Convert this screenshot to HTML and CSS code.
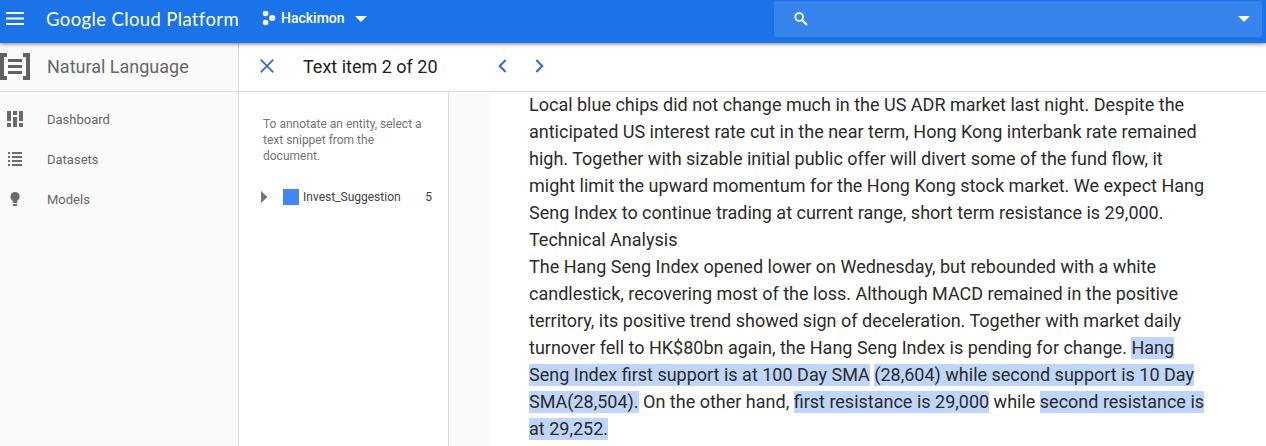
FILE: index.html
```html
<!DOCTYPE html>
<html lang="en">
<head>
<meta charset="utf-8">
<title>Natural Language – Google Cloud Platform</title>
<link rel="stylesheet" href="styles.css">
</head>
<body>
<header class="topbar">
  <svg class="menu" width="18" height="14" viewBox="0 0 18 14"><path d="M0 1h18M0 6.5h18M0 12h18" stroke="#fff" stroke-width="2"/></svg>
  <div class="brand"><span class="google">Google</span> <span class="cloud">Cloud Platform</span></div>
  <svg class="project-icon" width="14" height="16" viewBox="0 0 14 16" fill="#fff"><circle cx="3.6" cy="3.500" r="2.800"/><circle cx="10.200" cy="8" r="3.100"/><circle cx="3.6" cy="12.500" r="2.800"/></svg>
  <span class="project">Hackimon</span>
  <svg class="caret" width="12" height="6" viewBox="0 0 12 6"><path d="M0 0h12L6 6z" fill="#fff"/></svg>
  <div class="search">
    <svg width="14" height="14" viewBox="0 0 14 14" fill="none" stroke="#fff"><circle cx="5.2" cy="5" r="3.9" stroke-width="1.8"/><path d="M8 8l5 5" stroke-width="2.1"/></svg>
    <svg width="12" height="6" viewBox="0 0 12 6"><path d="M0 0h12L6 6z" fill="#fff"/></svg>
  </div>
</header>
<div class="shell">
  <aside class="sidebar">
    <div class="product">
      <svg width="30" height="28" viewBox="0 0 30 28" fill="none" stroke="#616161"><path d="M7 2H2v23h5M23 2h5v23h-5" stroke-width="4"/><path d="M8 7.500h14M8 13.500h14M8 19.500h14" stroke-width="3.2"/></svg>
      <span>Natural Language</span>
    </div>
    <nav>
      <a class="item"><svg width="30" height="20" viewBox="0 0 30 20" fill="#6b6b6b"><path d="M7 2h4v10H7zM7 14h4v4H7zM13 2h4v4h-4zM13 8h4v10h-4zM19 2h4v10h-4zM19 14h4v4h-4z"/></svg><span>Dashboard</span></a>
      <a class="item"><svg width="30" height="20" viewBox="0 0 30 20" fill="#6b6b6b"><path d="M8 3h2v2H8zM12 3h10v2H12zM8 7h2v2H8zM12 7h10v2H12zM8 11h2v2H8zM12 11h10v2H12zM8 15h2v2H8zM12 15h10v2H12z"/></svg><span>Datasets</span></a>
      <a class="item"><svg width="30" height="20" viewBox="0 0 30 20" fill="#6b6b6b"><path d="M15 3a4.600 4.600 0 0 0-2.400 8.500V13q0 1 1 1h2.800q1 0 1-1v-1.500A4.600 4.600 0 0 0 15 3zM12.800 15h4.400v1q0 1-1 1h-2.400q-1 0-1-1z"/></svg><span>Models</span></a>
    </nav>
  </aside>
  <main class="main">
    <div class="toolbar">
      <svg width="14" height="14" viewBox="0 0 14 14"><path d="M.7.7l12.600 12.600M13.300.7L.7 13.300" stroke="#3367d6" stroke-width="1.700"/></svg>
      <h1>Text item 2 of 20</h1>
      <svg width="9" height="14" viewBox="0 0 9 14" fill="none"><path d="M7.700 1L1.700 7l6 6" stroke="#3367d6" stroke-width="2"/></svg>
      <svg class="next" width="9" height="14" viewBox="0 0 9 14" fill="none"><path d="M1.300 1l6 6-6 6" stroke="#3367d6" stroke-width="2"/></svg>
    </div>
    <div class="content">
      <section class="labels">
        <p>To annotate an entity, select a<br>text snippet from the<br>document.</p>
        <div class="label">
          <svg width="7" height="12" viewBox="0 0 7 12"><path d="M0 0l6.500 6L0 12z" fill="#757575"/></svg>
          <span class="swatch"></span>
          <span class="name">Invest_Suggestion</span>
          <span class="count">5</span>
        </div>
      </section>
      <div class="gutter"></div>
      <article class="document">Local blue chips did not change much in the US ADR market last night. Despite the<br>
anticipated US interest rate cut in the near term, Hong Kong interbank rate remained<br>
high. Together with sizable initial public offer will divert some of the fund flow, it<br>
might limit the upward momentum for the Hong Kong stock market. We expect Hang<br>
Seng Index to continue trading at current range, short term resistance is 29,000.<br>
Technical Analysis<br>
The Hang Seng Index opened lower on Wednesday, but rebounded with a white<br>
candlestick, recovering most of the loss. Although MACD remained in the positive<br>
territory, its positive trend showed sign of deceleration. Together with market daily<br>
turnover fell to HK$80bn again, the Hang Seng Index is pending for change. <mark>Hang<br>
Seng Index first support is at 100 Day SMA</mark> <mark>(28,604) while second support is 10 Day<br>
SMA(28,504).</mark> On the other hand, <mark>first resistance is 29,000</mark> while <mark>second resistance is<br>
at 29,252.</mark></article>
    </div>
  </main>
</div>
</body>
</html>
```
FILE: styles.css
```css
* { box-sizing: border-box; }
body { margin: 0; height: 446px; overflow: hidden; display: flex; flex-direction: column; font-family: Roboto, sans-serif; background: #fff; }
svg { display: block; flex: none; }
.topbar { position: relative; z-index: 1; flex: none; height: 43px; display: flex; align-items: flex-start; background: #1a73e8; box-shadow: 0 1px 4px rgba(0,0,0,.5); color: #fff; padding-left: 6px; }
.menu { margin-top: 12px; }
.brand { width: 194px; margin: 7px 0 0 22px; font: 18.5px/24px Lato, sans-serif; letter-spacing: .37px; white-space: nowrap; }
.project-icon { margin: 10px 0 0 22px; }
.project { width: 65px; margin: 8px 0 0 5px; font-size: 14px; line-height: 20px; font-weight: 500; }
.caret { margin: 16px 0 0 9px; }
.search { width: 488px; height: 36px; margin: 1px 4px 0 auto; padding: 0 12px 0 20px; display: flex; align-items: center; justify-content: space-between; background: #3784ec; border-radius: 2px; }
.shell { flex: 1; min-height: 0; display: flex; }
.sidebar { width: 239px; flex: none; background: #fafafa; border-right: 1px solid #d9d9d9; color: #666; }
.product { height: 49px; padding-bottom: 1px; display: flex; align-items: center; gap: 17px; border-bottom: 1px solid #dcdcdc; font-size: 18px; }
nav { padding-top: 7px; }
.item { height: 40px; display: flex; align-items: center; gap: 17px; font-size: 13px; }
.main { flex: 1; min-width: 0; display: flex; flex-direction: column; }
.toolbar { height: 49px; flex: none; display: flex; align-items: center; padding: 0 0 2px 21px; border-bottom: 1px solid #dcdcdc; }
.toolbar h1 { width: 195px; margin: 0 0 0 29px; font-size: 18px; font-weight: 400; color: #212121; }
.next { margin-left: 28px; }
.content { flex: 1; min-height: 0; display: flex; }
.labels { width: 210px; flex: none; padding: 24px 16px 0 24px; border-right: 1px solid #dcdcdc; font-size: 12px; line-height: 16px; }
.labels p { margin: 0; color: #757575; white-space: nowrap; }
.label { display: flex; align-items: center; margin: 25px 0 0 -2px; color: #424242; }
.swatch { width: 16px; height: 16px; margin: 0 4px 0 15px; background: #4285f4; }
.count { margin-left: auto; }
.gutter { width: 40px; flex: none; background: #fafafa; }
.document { flex: 1; margin-top: -1px; padding: 0 0 0 40px; font-size: 18px; line-height: 27px; color: #2b2b2b; white-space: nowrap; }
mark { padding-bottom: 1px; background: #bfd5fa; color: inherit; }
```
